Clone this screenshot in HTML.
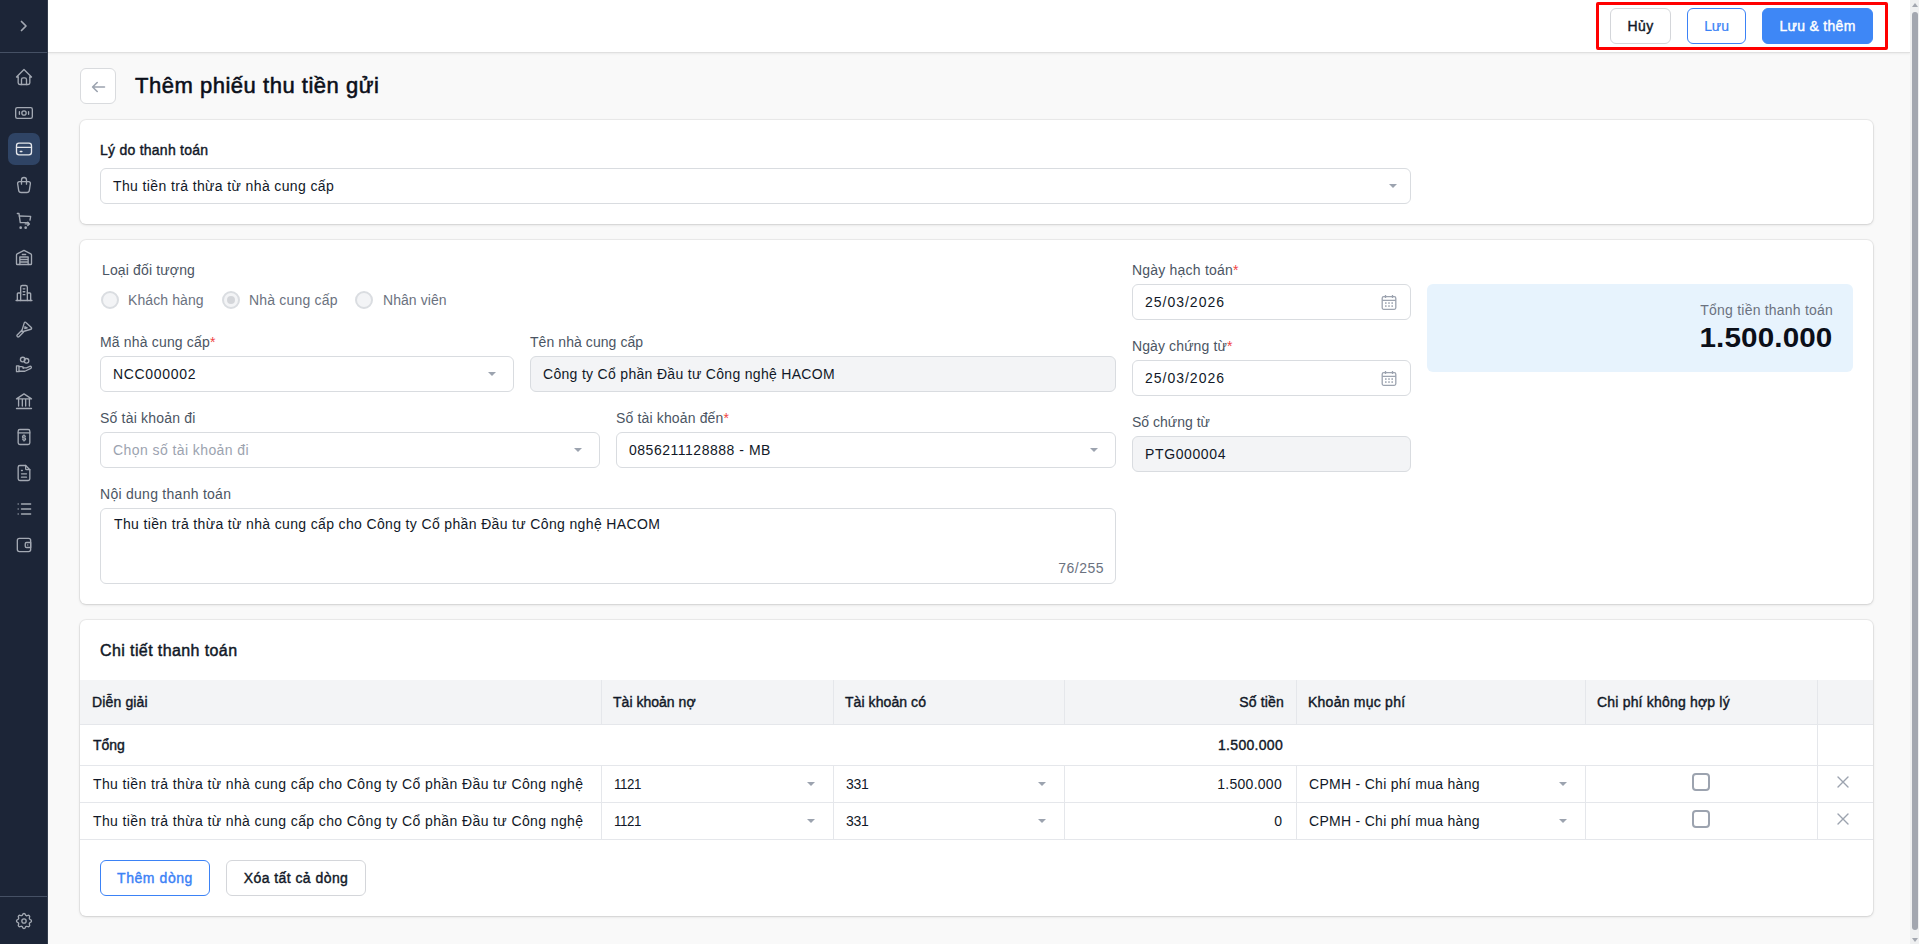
<!DOCTYPE html>
<html lang="vi">
<head>
<meta charset="utf-8">
<title>Thêm phiếu thu tiền gửi</title>
<style>
*{box-sizing:border-box;margin:0;padding:0}
html,body{width:1919px;height:944px;overflow:hidden}
body{position:relative;background:#f9f9f9;font-family:"Liberation Sans",sans-serif;font-size:14px;color:#111827}
.a{position:absolute}
.t{position:absolute;white-space:nowrap;line-height:20px;height:20px}
#side{left:0;top:0;width:48px;height:944px;background:#1c2537}
#side svg{position:absolute;fill:none;stroke:#a3a9b3;stroke-width:1.6;stroke-linecap:round;stroke-linejoin:round}
#hdr{left:48px;top:0;width:1862px;height:53px;background:#fff;border-bottom:1px solid #e0e0e0;box-shadow:0 1px 2px rgba(0,0,0,0.06)}
.btn{position:absolute;height:36px;border-radius:6px;border:1px solid #d4d6da;background:#fff;font-weight:400;-webkit-text-stroke:0.4px currentColor;line-height:34px;text-align:center;white-space:nowrap;letter-spacing:0.3px}
.card{position:absolute;left:80px;width:1793px;background:#fff;border-radius:6px;box-shadow:0 0 0 1px rgba(0,0,0,0.05),0 1px 3px rgba(0,0,0,0.13)}
.lbl{color:#4b5563;letter-spacing:0.15px}
.lblb{font-weight:400;-webkit-text-stroke:0.4px #111827;color:#111827;letter-spacing:0.25px}
.inp{position:absolute;height:36px;border:1px solid #d9dce0;border-radius:6px;background:#fff}
.inp.dis{background:#f3f4f6}
.itxt{position:absolute;left:12px;top:7px;line-height:20px;white-space:nowrap;color:#111827;letter-spacing:0.38px}
.req{color:#ef4444}
.caret{position:absolute;width:0;height:0;border-left:4px solid transparent;border-right:4px solid transparent;border-top:4.5px solid #9ca3af}
.radio{position:absolute;width:18px;height:18px;border-radius:50%;border:2px solid #dadde1;background:#f3f4f6}
.th{position:absolute;top:0;height:44px;line-height:44px;font-weight:400;-webkit-text-stroke:0.4px #111827;letter-spacing:0.1px;white-space:nowrap}
.vline{position:absolute;width:1px;background:#e5e7eb}
.hline{position:absolute;height:1px;background:#e5e7eb}
.td{position:absolute;line-height:20px;white-space:nowrap;color:#111827;letter-spacing:0.38px}
.chk{position:absolute;width:18px;height:18px;border:2px solid #9ca3af;border-radius:4px;background:#fff}
</style>
</head>
<body>

<!-- SIDEBAR -->
<div id="side" class="a">
  <svg style="left:18px;top:20px" width="12" height="12" viewBox="0 0 12 12"><path d="M3.5 1.5 L8 6 L3.5 10.5" stroke-width="1.7"/></svg>
  <div class="a" style="left:0;top:52px;width:47px;height:1px;background:#455064"></div><div class="a" style="left:47px;top:0;width:1px;height:944px;background:#343e4e"></div>
  <div class="a" style="left:8px;top:133px;width:32px;height:32px;border-radius:7px;background:#2f4465"></div>
  <svg style="left:14px;top:67px" width="20" height="20" viewBox="0 0 24 24" stroke-width="2"><path d="M5 12H3l9-9 9 9h-2"/><path d="M5 12v7a2 2 0 0 0 2 2h10a2 2 0 0 0 2-2v-7"/><path d="M9 21v-6a2 2 0 0 1 2-2h2a2 2 0 0 1 2 2v6"/></svg>
  <svg style="left:14px;top:103px" width="20" height="20" viewBox="0 0 24 24" stroke-width="2"><rect x="2" y="5.5" width="20" height="13" rx="2"/><circle cx="12" cy="12" r="2.6"/><path d="M6.5 10.5v3M17.5 10.5v3"/></svg>
  <svg style="left:14px;top:139px;stroke:#e5e7eb" width="20" height="20" viewBox="0 0 24 24" stroke-width="2"><rect x="3" y="5" width="18" height="14" rx="3"/><path d="M3 10h18M7.5 15h2"/></svg>
  <svg style="left:14px;top:175px" width="20" height="20" viewBox="0 0 24 24" stroke-width="2"><path d="M6.331 8h11.339a2 2 0 0 1 1.977 2.304l-1.255 8.152a3 3 0 0 1-2.966 2.544h-6.852a3 3 0 0 1-2.965-2.544l-1.255-8.152a2 2 0 0 1 1.977-2.304z"/><path d="M9 11V6a3 3 0 0 1 6 0v5"/></svg>
  <svg style="left:14px;top:211px" width="20" height="20" viewBox="0 0 24 24" stroke-width="2"><path d="M4 3h2l1.5 11H17"/><path d="M6.3 6L20 6.5 19.2 11"/><path d="M13.5 15.5h5m-2-2l2 2-2 2"/><circle cx="8" cy="20" r=".8"/><circle cx="14" cy="20" r=".8"/></svg>
  <svg style="left:14px;top:247px" width="20" height="20" viewBox="0 0 24 24" stroke-width="2"><path d="M3 20V9.5a1.5 1.5 0 0 1 .8-1.3L12 4l8.2 4.2a1.5 1.5 0 0 1 .8 1.3V20a1 1 0 0 1-1 1H4a1 1 0 0 1-1-1z"/><path d="M7 21v-9h10v9M7 15h10M7 18h10M10 9h4"/></svg>
  <svg style="left:14px;top:283px" width="20" height="20" viewBox="0 0 24 24" stroke-width="2"><path d="M2.5 21h19"/><path d="M8 21V5a2 2 0 0 1 2-2h4a2 2 0 0 1 2 2v16"/><path d="M4 21v-8a1 1 0 0 1 1-1h3M20 21v-8a1 1 0 0 0-1-1h-3"/><path d="M11 7h2M11 10.5h2M11 14h2"/></svg>
  <svg style="left:14px;top:319px" width="20" height="20" viewBox="0 0 24 24" stroke-width="2"><path d="M9.5 13.5L3.8 19.2a1.5 1.5 0 0 0 2.1 2.1L11.5 15.5"/><path d="M9.2 14.8L12.3 4.6a1.2 1.2 0 0 1 2-.5l6.5 6.2a1.2 1.2 0 0 1-.5 2L10 15.3a.7.7 0 0 1-.8-.5z"/><path d="M13.2 9.3l2.6 1.2-2.8 1z"/></svg>
  <svg style="left:14px;top:355px" width="20" height="20" viewBox="0 0 24 24" stroke-width="2"><circle cx="10.5" cy="5.5" r="2.8"/><circle cx="15" cy="7" r="2.8"/><path d="M3 13v7h3v-7z"/><path d="M6 19.5h7l7.2-3.5a1.3 1.3 0 0 0-1.2-2.3L15 15.5H10.5M6 14h3.5a2 2 0 0 1 2 2"/></svg>
  <svg style="left:14px;top:391px" width="20" height="20" viewBox="0 0 24 24" stroke-width="2"><path d="M3 21h18M3 9.5h18L12 3.5z"/><path d="M5.5 10v8M10 10v8M14 10v8M18.5 10v8"/></svg>
  <svg style="left:14px;top:427px" width="20" height="20" viewBox="0 0 24 24" stroke-width="2"><rect x="5" y="3" width="14" height="18" rx="2"/><path d="M5 7h14"/><path d="M13.5 11.5a1.5 1.5 0 0 0-1.5-1h-.5a1.3 1.3 0 0 0 0 2.6h1a1.3 1.3 0 0 1 0 2.6h-.5a1.5 1.5 0 0 1-1.5-1M12 9.5v1M12 15.7v1"/></svg>
  <svg style="left:14px;top:463px" width="20" height="20" viewBox="0 0 24 24" stroke-width="2"><path d="M14 3v4a1 1 0 0 0 1 1h4"/><path d="M17 21H7a2 2 0 0 1-2-2V5a2 2 0 0 1 2-2h7l5 5v11a2 2 0 0 1-2 2z"/><path d="M9 9h1M9 13h6M9 17h6"/></svg>
  <svg style="left:14px;top:499px" width="20" height="20" viewBox="0 0 24 24" stroke-width="2"><path d="M9 6h11M9 12h11M9 18h11M5 6v.01M5 12v.01M5 18v.01"/></svg>
  <svg style="left:14px;top:535px" width="20" height="20" viewBox="0 0 24 24" stroke-width="2"><rect x="4" y="4" width="16" height="16" rx="2.5"/><path d="M20 9h-5a1.5 1.5 0 0 0-1.5 1.5v3A1.5 1.5 0 0 0 15 15h5z"/><path d="M16.5 12v.01"/></svg>
  <div class="a" style="left:0;top:896px;width:47px;height:1px;background:#455064"></div>
  <svg style="left:14px;top:911px" width="20" height="20" viewBox="0 0 24 24" stroke-width="1.7"><path d="M10.325 4.317c.426-1.756 2.924-1.756 3.35 0a1.724 1.724 0 0 0 2.573 1.066c1.543-.94 3.31.826 2.37 2.37a1.724 1.724 0 0 0 1.065 2.572c1.756.426 1.756 2.924 0 3.35a1.724 1.724 0 0 0-1.066 2.573c.94 1.543-.826 3.31-2.37 2.37a1.724 1.724 0 0 0-2.572 1.065c-.426 1.756-2.924 1.756-3.35 0a1.724 1.724 0 0 0-2.573-1.066c-1.543.94-3.31-.826-2.37-2.37a1.724 1.724 0 0 0-1.065-2.572c-1.756-.426-1.756-2.924 0-3.35a1.724 1.724 0 0 0 1.066-2.573c-.94-1.543.826-3.31 2.37-2.37c1 .608 2.296.07 2.572-1.065z"/><circle cx="12" cy="12" r="2.6"/></svg>
</div>

<!-- HEADER -->
<div id="hdr" class="a">
  <div class="btn" style="left:1562px;top:8px;width:61px;letter-spacing:0.45px">Hủy</div>
  <div class="btn" style="left:1639px;top:8px;width:59px;border-color:#3b82f6;color:#3b82f6;-webkit-text-stroke:0.2px #3b82f6;letter-spacing:-0.1px">Lưu</div>
  <div class="btn" style="left:1714px;top:8px;width:111px;border-color:#3e87f6;background:#3e87f6;color:#fff">Lưu &amp; thêm</div>
  <div class="a" style="left:1548px;top:2px;width:292px;height:48px;border:3px solid #ff0000;border-radius:2px"></div>
</div>

<!-- SCROLLBAR -->
<div class="a" style="left:1910px;top:0;width:9px;height:944px;background:#eff0f1">
  <div class="a" style="left:2px;top:3px;width:0;height:0;border-left:3px solid transparent;border-right:3px solid transparent;border-bottom:4px solid #a3a7b0"></div>
  <div class="a" style="left:2px;top:12px;width:6px;height:918px;border-radius:3px;background:#a3a7b0"></div>
  <div class="a" style="left:2px;top:938px;width:0;height:0;border-left:3px solid transparent;border-right:3px solid transparent;border-top:4px solid #a3a7b0"></div>
</div>

<!-- TITLE -->
<div class="a" style="left:80px;top:68px;width:36px;height:36px;border:1px solid #d9dbde;border-radius:6px;background:#fff"><svg class="a" style="left:10px;top:12px" width="15" height="12" viewBox="0 0 15 12"><path d="M13.5 6H1.8M6.2 1.5L1.6 6l4.6 4.5" fill="none" stroke="#9ca3af" stroke-width="1.6" stroke-linecap="round" stroke-linejoin="round"/></svg></div>
<div class="t" style="left:135px;top:73px;font-size:22px;line-height:26px;height:26px;font-weight:400;-webkit-text-stroke:0.55px #0b0f19;letter-spacing:0.52px;color:#0b0f19">Thêm phiếu thu tiền gửi</div>

<!-- CARD 1 -->
<div class="card" style="top:120px;height:104px">
  <div class="t lblb" style="left:20px;top:20px">Lý do thanh toán</div>
  <div class="inp" style="left:20px;top:48px;width:1311px"><div class="itxt">Thu tiền trả thừa từ nhà cung cấp</div><div class="caret" style="right:13px;top:15px"></div></div>
</div>

<!-- CARD 2 -->
<div class="card" style="top:240px;height:364px">
  <div class="t lbl" style="left:22px;top:20px">Loại đối tượng</div>
  <div class="radio" style="left:21px;top:51px"></div>
  <div class="t lbl" style="left:48px;top:50px;color:#6b7280;letter-spacing:0.1px">Khách hàng</div>
  <div class="radio" style="left:142px;top:51px"><div class="a" style="left:3px;top:3px;width:8px;height:8px;border-radius:50%;background:#d4d6da"></div></div>
  <div class="t lbl" style="left:169px;top:50px;color:#6b7280;letter-spacing:0.19px">Nhà cung cấp</div>
  <div class="radio" style="left:275px;top:51px"></div>
  <div class="t lbl" style="left:303px;top:50px;color:#6b7280;letter-spacing:0.06px">Nhân viên</div>

  <div class="t lbl" style="left:20px;top:92px;letter-spacing:0.17px">Mã nhà cung cấp<span class="req">*</span></div>
  <div class="inp" style="left:20px;top:116px;width:414px"><div class="itxt" style="letter-spacing:0.68px">NCC000002</div><div class="caret" style="right:17px;top:15px"></div></div>
  <div class="t lbl" style="left:450px;top:92px;letter-spacing:0.07px">Tên nhà cung cấp</div>
  <div class="inp dis" style="left:450px;top:116px;width:586px"><div class="itxt" style="letter-spacing:0.31px">Công ty Cổ phần Đầu tư Công nghệ HACOM</div></div>

  <div class="t lbl" style="left:20px;top:168px;letter-spacing:0.2px">Số tài khoản đi</div>
  <div class="inp" style="left:20px;top:192px;width:500px"><div class="itxt" style="color:#9ca3af;letter-spacing:0.42px">Chọn số tài khoản đi</div><div class="caret" style="right:17px;top:15px"></div></div>
  <div class="t lbl" style="left:536px;top:168px;letter-spacing:0.15px">Số tài khoản đến<span class="req">*</span></div>
  <div class="inp" style="left:536px;top:192px;width:500px"><div class="itxt" style="letter-spacing:0.52px">0856211128888 - MB</div><div class="caret" style="right:17px;top:15px"></div></div>

  <div class="t lbl" style="left:20px;top:244px;letter-spacing:0.27px">Nội dung thanh toán</div>
  <div class="inp" style="left:20px;top:268px;width:1016px;height:76px"><div class="itxt" style="top:5px;left:13px;letter-spacing:0.355px">Thu tiền trả thừa từ nhà cung cấp cho Công ty Cổ phần Đầu tư Công nghệ HACOM</div>
    <div class="a" style="right:11px;top:49px;line-height:20px;color:#6b7280;letter-spacing:0.5px">76/255</div></div>

  <div class="t lbl" style="left:1052px;top:20px;letter-spacing:0.21px">Ngày hạch toán<span class="req">*</span></div>
  <div class="inp" style="left:1052px;top:44px;width:279px"><div class="itxt" style="letter-spacing:0.99px">25/03/2026</div><svg class="a" style="left:248px;top:9px" width="16" height="17" viewBox="0 0 16 17"><g fill="none" stroke="#9ca3af" stroke-width="1.3"><rect x="1.2" y="2.7" width="13.6" height="12.6" rx="1.5"/><path d="M1.2 6.3h13.6M4.5 1v3M11.5 1v3"/></g><g fill="#9ca3af"><rect x="4" y="8.3" width="1.6" height="1.5"/><rect x="7.2" y="8.3" width="1.6" height="1.5"/><rect x="10.4" y="8.3" width="1.6" height="1.5"/><rect x="4" y="11.3" width="1.6" height="1.5"/><rect x="7.2" y="11.3" width="1.6" height="1.5"/><rect x="10.4" y="11.3" width="1.6" height="1.5"/></g></svg></div>
  <div class="t lbl" style="left:1052px;top:96px;letter-spacing:0.11px">Ngày chứng từ<span class="req">*</span></div>
  <div class="inp" style="left:1052px;top:120px;width:279px"><div class="itxt" style="letter-spacing:0.99px">25/03/2026</div><svg class="a" style="left:248px;top:9px" width="16" height="17" viewBox="0 0 16 17"><g fill="none" stroke="#9ca3af" stroke-width="1.3"><rect x="1.2" y="2.7" width="13.6" height="12.6" rx="1.5"/><path d="M1.2 6.3h13.6M4.5 1v3M11.5 1v3"/></g><g fill="#9ca3af"><rect x="4" y="8.3" width="1.6" height="1.5"/><rect x="7.2" y="8.3" width="1.6" height="1.5"/><rect x="10.4" y="8.3" width="1.6" height="1.5"/><rect x="4" y="11.3" width="1.6" height="1.5"/><rect x="7.2" y="11.3" width="1.6" height="1.5"/><rect x="10.4" y="11.3" width="1.6" height="1.5"/></g></svg></div>
  <div class="t lbl" style="left:1052px;top:172px;letter-spacing:0.01px">Số chứng từ</div>
  <div class="inp dis" style="left:1052px;top:196px;width:279px"><div class="itxt" style="letter-spacing:0.62px">PTG000004</div></div>

  <div class="a" style="left:1347px;top:44px;width:426px;height:88px;background:#e7f3fd;border-radius:6px">
    <div class="t" style="right:20px;top:16px;color:#6b7280;letter-spacing:0.21px">Tổng tiền thanh toán</div>
    <div class="t" style="right:21px;top:38px;font-size:28px;line-height:32px;height:32px;font-weight:700;letter-spacing:0.1px;color:#0b0f19;transform:scaleX(1.06);transform-origin:100% 50%">1.500.000</div>
  </div>
</div>

<!-- CARD 3 -->
<div class="card" style="top:620px;height:296px">
  <div class="t" style="left:20px;top:19px;font-size:16px;line-height:24px;height:24px;font-weight:400;-webkit-text-stroke:0.45px #111827;letter-spacing:0.4px;color:#111827">Chi tiết thanh toán</div>
  <div class="a" style="left:0;top:60px;width:1793px;height:44px;background:#f3f4f6"></div>
  <div class="th" style="left:12px;top:60px;letter-spacing:0.14px">Diễn giải</div>
  <div class="th" style="left:533px;top:60px;letter-spacing:0.02px">Tài khoản nợ</div>
  <div class="th" style="left:765px;top:60px;letter-spacing:0.07px">Tài khoản có</div>
  <div class="th" style="right:589px;top:60px;letter-spacing:0.15px">Số tiền</div>
  <div class="th" style="left:1228px;top:60px;letter-spacing:0.24px">Khoản mục phí</div>
  <div class="th" style="left:1517px;top:60px;letter-spacing:0.19px">Chi phí không hợp lý</div>

  <div class="hline" style="left:0;top:104px;width:1793px"></div>
  <div class="hline" style="left:0;top:145px;width:1793px"></div>
  <div class="hline" style="left:0;top:182px;width:1793px"></div>
  <div class="hline" style="left:0;top:219px;width:1793px"></div>
  <div class="vline" style="left:521px;top:60px;height:44px"></div>
<div class="vline" style="left:521px;top:146px;height:73px"></div>
<div class="vline" style="left:753px;top:60px;height:44px"></div>
<div class="vline" style="left:753px;top:146px;height:73px"></div>
<div class="vline" style="left:984px;top:60px;height:44px"></div>
<div class="vline" style="left:984px;top:146px;height:73px"></div>
<div class="vline" style="left:1216px;top:60px;height:44px"></div>
<div class="vline" style="left:1216px;top:146px;height:73px"></div>
<div class="vline" style="left:1505px;top:60px;height:44px"></div>
<div class="vline" style="left:1505px;top:146px;height:73px"></div>
<div class="vline" style="left:1737px;top:60px;height:44px"></div>
<div class="vline" style="left:1737px;top:146px;height:73px"></div>
<div class="vline" style="left:1737px;top:105px;height:40px"></div>


  <div class="t" style="left:13px;top:115px;-webkit-text-stroke:0.4px #111827;letter-spacing:-0.07px;color:#111827">Tổng</div>
  <div class="t" style="right:590px;top:115px;-webkit-text-stroke:0.4px #111827;letter-spacing:0.3px;color:#111827">1.500.000</div>

  <div class="td" style="left:13px;top:154px;letter-spacing:0.389px">Thu tiền trả thừa từ nhà cung cấp cho Công ty Cổ phần Đầu tư Công nghệ</div>
  <div class="td" style="left:534px;top:154px;letter-spacing:-0.45px;transform:scaleX(0.95);transform-origin:0 50%">1121</div><div class="caret" style="left:727px;top:162px"></div>
  <div class="td" style="left:766px;top:154px;letter-spacing:-0.28px">331</div><div class="caret" style="left:958px;top:162px"></div>
  <div class="td" style="right:591px;top:154px;letter-spacing:0.275px">1.500.000</div>
  <div class="td" style="left:1229px;top:154px;letter-spacing:0.287px">CPMH - Chi phí mua hàng</div><div class="caret" style="left:1479px;top:162px"></div>
  <div class="chk" style="left:1612px;top:153px"></div>
  <svg class="a" style="left:1757px;top:156px" width="12" height="12" viewBox="0 0 12 12"><path d="M1 1L11 11M11 1L1 11" stroke="#9ca3af" stroke-width="1.4" stroke-linecap="round"/></svg>
<div class="td" style="left:13px;top:191px;letter-spacing:0.389px">Thu tiền trả thừa từ nhà cung cấp cho Công ty Cổ phần Đầu tư Công nghệ</div>
  <div class="td" style="left:534px;top:191px;letter-spacing:-0.45px;transform:scaleX(0.95);transform-origin:0 50%">1121</div><div class="caret" style="left:727px;top:199px"></div>
  <div class="td" style="left:766px;top:191px;letter-spacing:-0.28px">331</div><div class="caret" style="left:958px;top:199px"></div>
  <div class="td" style="right:591px;top:191px;letter-spacing:0">0</div>
  <div class="td" style="left:1229px;top:191px;letter-spacing:0.287px">CPMH - Chi phí mua hàng</div><div class="caret" style="left:1479px;top:199px"></div>
  <div class="chk" style="left:1612px;top:190px"></div>
  <svg class="a" style="left:1757px;top:193px" width="12" height="12" viewBox="0 0 12 12"><path d="M1 1L11 11M11 1L1 11" stroke="#9ca3af" stroke-width="1.4" stroke-linecap="round"/></svg>


  <div class="btn" style="left:20px;top:240px;width:110px;border-color:#3b82f6;color:#3b82f6;letter-spacing:0.56px">Thêm dòng</div>
  <div class="btn" style="left:146px;top:240px;width:140px;letter-spacing:0.44px">Xóa tất cả dòng</div>
</div>

</body>
</html>
